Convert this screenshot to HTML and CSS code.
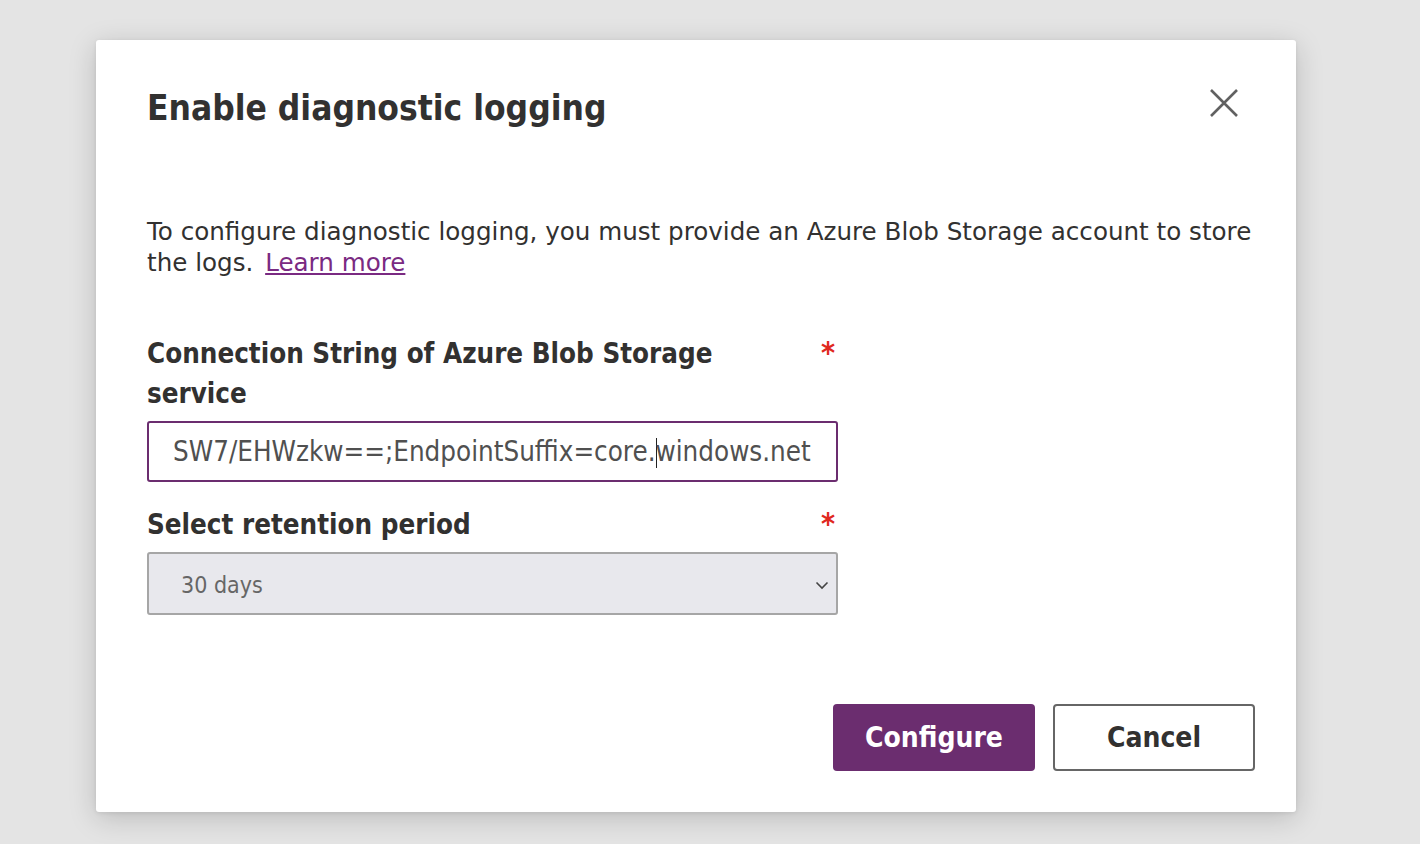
FILE: index.html
```html
<!DOCTYPE html>
<html lang="en">
<head>
<meta charset="utf-8">
<title>Enable diagnostic logging</title>
<link rel="stylesheet" href="styles.css">
</head>
<body>
<div class="backdrop">
  <div class="dialog" role="dialog" aria-labelledby="dlg-title">
    <div class="dialog-header">
      <h1 id="dlg-title" class="dialog-title">Enable diagnostic logging</h1>
      <button class="close-btn" aria-label="Close">
        <svg width="30" height="30" viewBox="0 0 30 30"><path d="M2 2 L28 28 M28 2 L2 28" stroke="#616161" stroke-width="2.6" fill="none"/></svg>
      </button>
    </div>
    <p class="intro">To configure diagnostic logging, you must provide an Azure Blob Storage account to store the logs. <a href="#" class="link">Learn more</a></p>
    <div class="form">
      <div class="field">
        <div class="label-row">
          <label class="label">Connection String of Azure Blob Storage service</label>
          <span class="req">*</span>
        </div>
        <div class="input"><span class="input-text">SW7/EHWzkw==;EndpointSuffix=core.<span class="caret"></span>windows.net</span></div>
      </div>
      <div class="field">
        <div class="label-row">
          <label class="label">Select retention period</label>
          <span class="req">*</span>
        </div>
        <div class="select">
          <span class="select-text">30 days</span>
          <svg class="chev" width="14" height="10" viewBox="0 0 14 10"><path d="M1.5 2.5 L7 8 L12.5 2.5" stroke="#444" stroke-width="1.6" fill="none"/></svg>
        </div>
      </div>
    </div>
    <div class="actions">
      <button class="btn btn-primary">Configure</button>
      <button class="btn btn-secondary">Cancel</button>
    </div>
  </div>
</div>
</body>
</html>
```
FILE: styles.css
```css
html, body {
  margin: 0;
  padding: 0;
}
body {
  background: #e4e4e4;
  font-family: "DejaVu Sans", "Liberation Sans", sans-serif;
  font-stretch: condensed;
  color: #323130;
  width: 1420px;
  height: 844px;
  overflow: hidden;
}
.backdrop {
  padding: 40px 0 0 96px;
}
.dialog {
  width: 1200px;
  height: 772px;
  box-sizing: border-box;
  background: #fff;
  border-radius: 3px;
  box-shadow: 0 6px 28px rgba(0,0,0,0.18), 0 1px 4px rgba(0,0,0,0.08);
  padding: 0 41px 0 51px;
  display: flex;
  flex-direction: column;
}
.dialog-header {
  display: flex;
  justify-content: space-between;
  align-items: flex-start;
  padding-top: 44px;
}
.dialog-title {
  margin: 0;
  font-size: 35px;
  font-weight: bold;
  line-height: 48px;
  color: #323130;
}
.close-btn {
  background: none;
  border: none;
  padding: 0;
  margin: 4px 16px 0 0;
  width: 30px;
  height: 30px;
  cursor: pointer;
}
.intro {
  margin: 84px 0 0 0;
  font-size: 24.6px;
  font-stretch: normal;
  line-height: 31px;
  color: #323130;
}
.link {
  color: #7a2a82;
  text-decoration: underline;
  margin-left: 4px;
}
.form {
  width: 691px;
  margin-top: 55px;
  display: flex;
  flex-direction: column;
  gap: 22px;
}
.field {
  display: flex;
  flex-direction: column;
}
.label-row {
  display: flex;
  justify-content: space-between;
  align-items: flex-start;
  margin-bottom: 8px;
}
.label {
  font-size: 27.5px;
  font-weight: bold;
  line-height: 40px;
  width: 600px;
  color: #323130;
}
.req {
  color: #e0281e;
  font-size: 30px;
  font-weight: bold;
  line-height: 30px;
  margin: 5px 3px 0 0;
}
.input {
  height: 61px;
  box-sizing: border-box;
  border: 2px solid #6b2d6f;
  border-radius: 3px;
  display: flex;
  align-items: center;
  padding-left: 24px;
  overflow: hidden;
  white-space: nowrap;
}
.input-text {
  font-size: 27.5px;
  color: #505050;
}
.caret {
  display: inline-block;
  width: 1px;
  height: 30px;
  background: #222;
  vertical-align: middle;
  margin-right: -1px;
}
.select {
  height: 63px;
  box-sizing: border-box;
  border: 2px solid #a6a6a6;
  border-radius: 3px;
  background: #e8e8ed;
  display: flex;
  align-items: center;
  justify-content: space-between;
  padding: 2px 7px 0 32px;
}
.select-text {
  font-size: 23px;
  color: #666;
}
.actions {
  margin-top: auto;
  margin-bottom: 41px;
  display: flex;
  justify-content: flex-end;
  gap: 18px;
}
.btn {
  width: 202px;
  height: 67px;
  box-sizing: border-box;
  border-radius: 4px;
  font-family: inherit;
  font-stretch: condensed;
  font-size: 28px;
  font-weight: bold;
  cursor: pointer;
}
.btn-primary {
  background: #6b2d6f;
  color: #fff;
  border: none;
}
.btn-secondary {
  background: #fff;
  color: #323130;
  border: 2px solid #666;
}
```
